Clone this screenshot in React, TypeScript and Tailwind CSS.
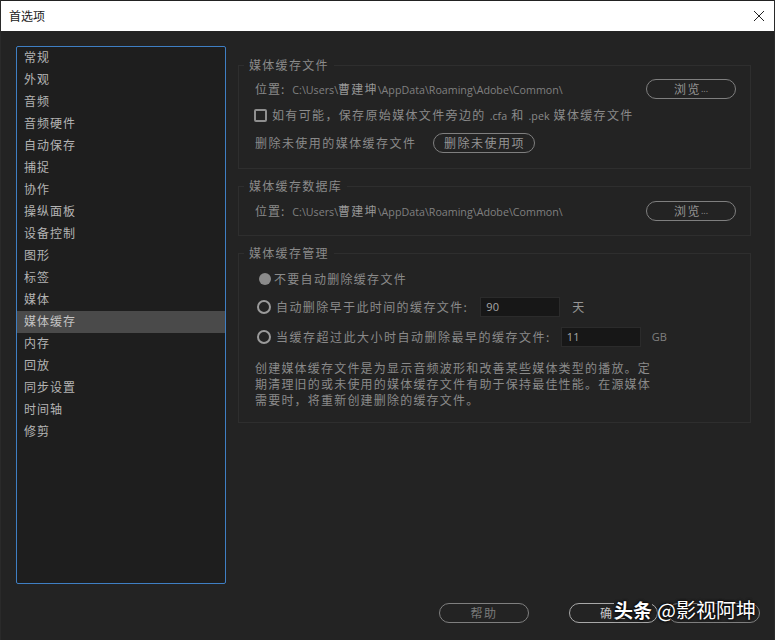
const categories = [
  "常规", "外观", "音频", "音频硬件", "自动保存", "捕捉", "协作", "操纵面板", "设备控制",
  "图形", "标签", "媒体", "媒体缓存", "内存", "回放", "同步设置", "时间轴", "修剪",
];

const cjk = "font-['Noto_Sans_CJK_SC','Open_Sans',sans-serif]";
const latin = "font-['Open_Sans',sans-serif] tracking-normal";

function PillButton({ label, className, textClass = "text-[#949494]" }: { label?: React.ReactNode; className: string; textClass?: string }) {
  return (
    <div className={`flex items-center justify-center rounded-full border border-[#7f7f7f] h-[20px] shrink-0 text-[12px] tracking-[1.5px] ${textClass} ${className}`}>
      {label}
    </div>
  );
}

function Section({ title, className, children }: { title: string; className: string; children: React.ReactNode }) {
  return (
    <fieldset className={`border border-[#2e2e2e] ml-[238px] w-[513px] ${className}`}>
      <legend className="ml-[5px] px-[5px] text-[12px] leading-[16px] tracking-[1.3px] text-[#8a8a8a]">{title}</legend>
      {children}
    </fieldset>
  );
}

function PathRow({ top }: { top: string }) {
  return (
    <div className={`flex items-center pl-[16px] pr-[14px] ${top}`}>
      <span className="text-[12px] tracking-[1px] text-[#8a8a8a]">位置:</span>
      <span className={`ml-[7px] text-[10.7px] text-[#808080] ${latin}`}>
        C:\Users\<span className={`${cjk} text-[12px] tracking-[1.2px] text-[#969696]`}>曹建坤</span>\AppData\Roaming\Adobe\Common\
      </span>
      <PillButton
        label={<>浏览<span className={`text-[9px] ${latin}`}>...</span></>}
        className="ml-auto w-[90px]"
      />
    </div>
  );
}

function Radio({ filled }: { filled?: boolean }) {
  return filled ? (
    <span className="ml-[1px] w-[12px] h-[12px] rounded-full bg-[#8a8a8a]" />
  ) : (
    <span className="w-[14px] h-[14px] rounded-full border-2 border-[#9a9a9a]" />
  );
}

function NumberBox({ value, className }: { value: string; className: string }) {
  return (
    <div className={`h-[20px] flex items-center pl-[5px] bg-[#171717] border border-[#2b2b2b] text-[11px] text-[#a8a8a8] ${latin} ${className}`}>
      {value}
    </div>
  );
}

export default function App() {
  return (
    <div className={`relative w-[775px] h-[640px] overflow-hidden bg-[#232323] border-x border-[#2a2a2a] ${cjk}`}>
      <div className="flex items-center justify-between h-[31px] bg-white border-t border-[#222] pl-[8px] pr-[8px] text-[12px] text-[#1a1a1a]">
        <span>首选项</span>
        <svg width="12" height="12" viewBox="0 0 12 12" className="mr-[1px]">
          <path d="M1 1 L11 11 M11 1 L1 11" stroke="#222" strokeWidth="1" fill="none" />
        </svg>
      </div>

      <div className="flex pt-[15px] pl-[15px]">
        <div className="w-[210px] h-[538px] shrink-0 bg-[#1e1e1e] border border-[#3f7fc4] rounded-[2px]">
          {categories.map((name, i) => (
            <div
              key={name}
              className={`h-[22px] leading-[19px] pl-[7px] text-[12px] tracking-[1px] text-[#b4b4b4] ${i === 12 ? "bg-[#4a4a4a] text-[#c4c4c4]" : ""}`}
            >
              {name}
            </div>
          ))}
        </div>

        <div className="ml-[-226px] w-[775px]">
          <Section title="媒体缓存文件" className="mt-[11px] h-[112px]">
            <PathRow top="pt-[6px]" />
            <div className="flex items-center gap-[5px] pl-[15px] mt-[6px] h-[20px]">
              <span className="w-[13px] h-[13px] border-2 border-[#8f8f8f] rounded-[2px]" />
              <span className="text-[12px] tracking-[1.35px] text-[#8a8a8a]">
                如有可能，保存原始媒体文件旁边的 <span className={`text-[10.7px] ${latin}`}>.cfa</span> 和 <span className={`text-[10.7px] ${latin}`}>.pek</span> 媒体缓存文件
              </span>
            </div>
            <div className="flex items-center pl-[16px] mt-[8px]">
              <span className="text-[12px] tracking-[1.45px] text-[#8a8a8a]">删除未使用的媒体缓存文件</span>
              <PillButton label="删除未使用项" className="ml-[17px] w-[102px]" />
            </div>
          </Section>

          <Section title="媒体缓存数据库" className="mt-[9px] h-[58px]">
            <PathRow top="pt-[7px]" />
          </Section>

          <Section title="媒体缓存管理" className="mt-[9px] h-[178px]">
            <div className="flex items-center gap-[3px] pl-[19px] pt-[9px] h-[27px] text-[12px] tracking-[1.3px] text-[#8a8a8a]">
              <Radio filled />
              <span>不要自动删除缓存文件</span>
            </div>
            <div className="flex items-center gap-[5px] pl-[18px] mt-[9px] h-[20px] text-[12px] tracking-[1.4px] text-[#8a8a8a]">
              <Radio />
              <span>自动删除早于此时间的缓存文件:</span>
              <NumberBox value="90" className="ml-[7px] w-[80px]" />
              <span className="ml-[7px] text-[#969696]">天</span>
            </div>
            <div className="flex items-center gap-[5px] pl-[18px] mt-[10px] h-[20px] text-[12px] tracking-[1.5px] text-[#8a8a8a]">
              <Radio />
              <span>当缓存超过此大小时自动删除最早的缓存文件:</span>
              <NumberBox value="11" className="ml-[5px] w-[80px]" />
              <span className={`ml-[6px] text-[11px] text-[#808080] ${latin}`}>GB</span>
            </div>
            <p className="ml-[16px] mt-[13px] w-[400px] text-[12px] leading-[16px] tracking-[1.2px] text-[#8a8a8a]">
              创建媒体缓存文件是为显示音频波形和改善某些媒体类型的播放。定期清理旧的或未使用的媒体缓存文件有助于保持最佳性能。在源媒体需要时，将重新创建删除的缓存文件。
            </p>
          </Section>
        </div>
      </div>

      <div className="flex mt-[19px] ml-[438px]">
        <PillButton label="帮助" className="w-[90px]" textClass="text-[#7a7a7a]" />
        <PillButton label="确定" className="ml-[40px] w-[89px] border-[#a8a8a8]" textClass="text-[#c8c8c8]" />
        <PillButton className="ml-[10px] w-[92px]" />
      </div>

      <div className="absolute left-[613px] top-[597px] flex items-center text-white leading-[26px] [text-shadow:0_0_3px_#000,0_0_3px_#000]">
        <span className="font-bold text-[19px] leading-[14px] bg-[#232323]">头条</span>
        <span className="ml-[5px] text-[20px]">@影视阿坤</span>
      </div>
    </div>
  );
}
